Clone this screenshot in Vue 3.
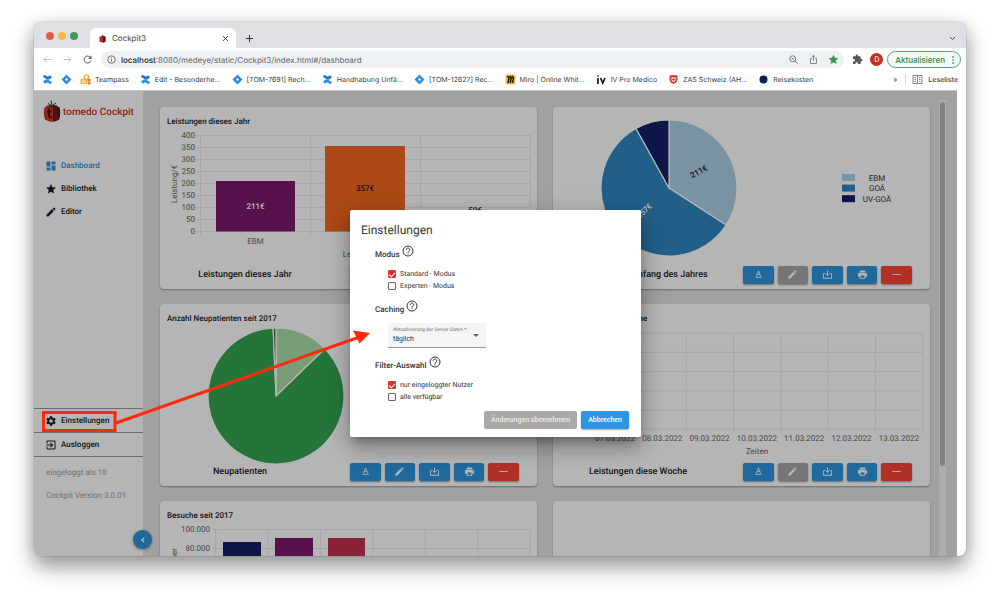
<script setup>
import { ref } from 'vue'

const tabs = [{ title: 'Cockpit3' }]

const bookmarks = [
  { icon: 'confluence', label: '' },
  { icon: 'jira', label: '' },
  { icon: 'team', label: 'Teampass' },
  { icon: 'confluence', label: 'Edit - Besonderhe...' },
  { icon: 'jira', label: '[TOM-7691] Rech...' },
  { icon: 'confluence', label: 'Handhabung Unfä...' },
  { icon: 'jira', label: '[TOM-12627] Rec...' },
  { icon: 'miro', label: 'Miro | Online Whit...' },
  { icon: 'iv', label: 'IV Pro Medico' },
  { icon: 'shield', label: 'ZAS Schweiz (AH...' },
  { icon: 'globe', label: 'Reisekosten' },
]

const nav = [
  { label: 'Dashboard', active: true, d: 'M3 13h8V3H3v10zm0 8h8v-6H3v6zm10 0h8V11h-8v10zm0-18v6h8V3h-8z' },
  { label: 'Bibliothek', d: 'M12 17.27 18.18 21l-1.64-7.03L22 9.24l-7.19-.61L12 2 9.19 8.63 2 9.24l5.46 4.73L5.82 21z' },
  { label: 'Editor', d: 'M3 17.25V21h3.75L17.81 9.94l-3.75-3.75L3 17.25zM20.71 7.04a1 1 0 0 0 0-1.41l-2.34-2.34a1 1 0 0 0-1.41 0l-1.83 1.83 3.75 3.75 1.83-1.83z' },
]

const lowerNav = [
  { label: 'Einstellungen', d: 'M19.14 12.94c.04-.3.06-.61.06-.94 0-.32-.02-.64-.07-.94l2.03-1.58a.49.49 0 0 0 .12-.61l-1.92-3.32a.488.488 0 0 0-.59-.22l-2.39.96c-.5-.38-1.03-.7-1.62-.94l-.36-2.54a.484.484 0 0 0-.48-.41h-3.84c-.24 0-.43.17-.47.41l-.36 2.54c-.59.24-1.13.57-1.62.94l-2.39-.96c-.22-.08-.47 0-.59.22L2.74 8.87c-.12.21-.08.47.12.61l2.03 1.58c-.05.3-.09.63-.09.94s.02.64.07.94l-2.03 1.58a.49.49 0 0 0-.12.61l1.92 3.32c.12.22.37.29.59.22l2.39-.96c.5.38 1.03.7 1.62.94l.36 2.54c.05.24.24.41.48.41h3.84c.24 0 .44-.17.47-.41l.36-2.54c.59-.24 1.13-.56 1.62-.94l2.39.96c.22.08.47 0 .59-.22l1.92-3.32c.12-.22.07-.47-.12-.61l-2.01-1.58zM12 15.6A3.61 3.61 0 0 1 8.4 12c0-1.98 1.62-3.6 3.6-3.6s3.6 1.62 3.6 3.6-1.62 3.6-3.6 3.6z' },
  { label: 'Ausloggen', d: 'M10.09 15.59 11.5 17l5-5-5-5-1.41 1.41L12.67 11H3v2h9.67l-2.58 2.59zM19 3H5a2 2 0 0 0-2 2v4h2V5h14v14H5v-4H3v4a2 2 0 0 0 2 2h14a2 2 0 0 0 2-2V5a2 2 0 0 0-2-2z' },
]

const actions = [
  { name: 'Schrift', kind: 'text', d: 'M5 17v2h14v-2H5zm4.5-4.2h5l.9 2.2h2.1L12.75 4h-1.5L6.5 15h2.1l.9-2.2zM12 5.98 13.87 11h-3.74L12 5.98z' },
  { name: 'Bearbeiten', kind: 'edit', d: nav[2].d },
  { name: 'Herunterladen', kind: 'download', d: 'M11 3h2v8h3l-4 4-4-4h3zM2 11h2v8h16v-8h-4V9h4a2 2 0 0 1 2 2v8a2 2 0 0 1-2 2H4a2 2 0 0 1-2-2v-8a2 2 0 0 1 2-2h4v2z' },
  { name: 'Drucken', kind: 'print', d: 'M19 8H5c-1.66 0-3 1.34-3 3v6h4v4h12v-4h4v-6c0-1.66-1.34-3-3-3zm-3 11H8v-5h8v5zm3-7c-.55 0-1-.45-1-1s.45-1 1-1 1 .45 1 1-.45 1-1 1zm-1-9H6v4h12V3z' },
  { name: 'Entfernen', kind: 'remove', d: 'M3 11h18v2H3z' },
]

const cards = [
  { id: 'bar', title: 'Leistungen dieses Jahr', caption: 'Leistungen dieses Jahr' },
  { id: 'pie', title: '', caption: 'Leistungen seit Anfang des Jahres', locked: true },
  { id: 'new', title: 'Anzahl Neupatienten seit 2017', caption: 'Neupatienten', short: true },
  { id: 'week', title: 'Leistungen diese Woche', caption: 'Leistungen diese Woche', locked: true },
  { id: 'visits', title: 'Besuche seit 2017', caption: '' },
  { id: 'empty', title: '', caption: '' },
]

const yTicks = [400, 350, 300, 250, 200, 150, 100, 50, 0]
const days = ['07.03.2022', '08.03.2022', '09.03.2022', '10.03.2022', '11.03.2022', '12.03.2022', '13.03.2022']
const legend = [
  { label: 'EBM', color: '#abd0e6' },
  { label: 'GOÄ', color: '#3187c0' },
  { label: 'UV-GOÄ', color: '#141f66' },
]

function slice(cx, cy, r, from, to) {
  const point = (deg) => {
    const a = ((deg - 90) * Math.PI) / 180
    return `${cx + r * Math.cos(a)} ${cy + r * Math.sin(a)}`
  }
  return `M${cx} ${cy}L${point(from)}A${r} ${r} 0 ${to - from > 180 ? 1 : 0} 1 ${point(to)}Z`
}

const standard = ref(true)
const expert = ref(false)
const onlyUser = ref(true)
const allUsers = ref(false)
const caching = ref('täglich')
</script>

<template>
  <div class="desktop">
    <div class="window">
      <header class="tabstrip">
        <div class="lights"><i class="red"></i><i class="yellow"></i><i class="green"></i></div>
        <div v-for="t in tabs" :key="t.title" class="tab">
          <svg class="ico9" viewBox="0 0 18 18"><path fill="#b32822" d="M3 6Q9 2 15 6v9q-6 4-12 0z" /><path fill="#5b1715" d="M10 4q4 0 5 2v9q-2 2-5 2z" /><path stroke="#444" stroke-width="1.5" fill="none" d="M9 5V1M6 4l3 1 3-1" /></svg>
          <span>{{ t.title }}</span>
          <button class="plain" aria-label="Tab schließen"><svg class="ico9" viewBox="0 0 18 18"><path d="M4 4l10 10M14 4L4 14" stroke="#444" stroke-width="1.8" /></svg></button>
        </div>
        <button class="plain newtab" aria-label="Neuer Tab"><svg class="ico9" viewBox="0 0 18 18"><path d="M9 2v14M2 9h14" stroke="#333" stroke-width="2" /></svg></button>
        <button class="plain tabmenu" aria-label="Tabs suchen"><svg class="ico9" viewBox="0 0 18 18"><path d="M4 6l5 5 5-5" fill="none" stroke="#444" stroke-width="2" /></svg></button>
      </header>

      <div class="toolbar">
        <button class="plain" aria-label="Zurück"><svg class="ico11" viewBox="0 0 22 22"><path d="M19 11H4M10 5l-6 6 6 6" fill="none" stroke="#b4b7ba" stroke-width="1.8" /></svg></button>
        <button class="plain" aria-label="Vorwärts"><svg class="ico11" viewBox="0 0 22 22"><path d="M3 11h15M12 5l6 6-6 6" fill="none" stroke="#b4b7ba" stroke-width="1.8" /></svg></button>
        <button class="plain" aria-label="Neu laden"><svg class="ico11" viewBox="0 0 22 22"><path d="M17 7a7 7 0 1 0 1 6" fill="none" stroke="#55585c" stroke-width="2" /><path d="M19 3v7h-7z" fill="#55585c" /></svg></button>
        <div class="urlbar">
          <svg class="ico11" viewBox="0 0 22 22"><circle cx="11" cy="11" r="7.5" fill="none" stroke="#5f6368" stroke-width="1.7" /><path d="M11 10v5M11 6.500v2" stroke="#5f6368" stroke-width="1.800" /></svg>
          <span class="url"><b>localhost</b>:8080/medeye/static/Cockpit3/index.html#/dashboard</span>
          <button class="plain" aria-label="Zoom"><svg class="ico11" viewBox="0 0 22 22"><circle cx="9.500" cy="9.500" r="6" fill="none" stroke="#6b6e72" stroke-width="1.800" /><path d="M14 14l5 5M7 9.500h5" stroke="#6b6e72" stroke-width="2" /></svg></button>
          <button class="plain" aria-label="Teilen"><svg class="ico11" viewBox="0 0 22 22"><path d="M7.500 9H5v10h12V9h-2.500M11 14V3M7.500 6L11 2.800 14.500 6" fill="none" stroke="#6b6e72" stroke-width="1.600" /></svg></button>
          <button class="plain" aria-label="Lesezeichen"><svg class="ico11" viewBox="1 1 22 22"><path :d="nav[1].d" fill="#3b9650" /></svg></button>
        </div>
        <button class="plain puzzle" aria-label="Erweiterungen"><svg class="ico11" viewBox="0 0 24 24"><path fill="#55585c" d="M20.500 11H19V7a2 2 0 0 0-2-2h-4V3.500a2.500 2.500 0 0 0-5 0V5H4a2 2 0 0 0-2 2v3.800h1.500a2.700 2.700 0 0 1 0 5.400H2V20a2 2 0 0 0 2 2h3.800v-1.500a2.700 2.700 0 0 1 5.400 0V22H17a2 2 0 0 0 2-2v-4h1.500a2.500 2.500 0 0 0 0-5z" /></svg></button>
        <span class="avatar">D</span>
        <button class="update">Aktualisieren<svg viewBox="0 0 6 16"><circle cx="3" cy="3" r="1.300" /><circle cx="3" cy="8" r="1.300" /><circle cx="3" cy="13" r="1.300" /></svg></button>
      </div>

      <nav class="bookmarks">
        <a v-for="(b, i) in bookmarks" :key="i" href="#" :aria-label="b.label || b.icon" :class="{ bare: !b.label }">
          <svg v-if="b.icon === 'confluence'" class="ico11" viewBox="0 0 22 22"><path fill="#2f8fe0" d="M2 16q5-8 11-4l7 4-2.500 4.500-6-3q-3-1.500-5 2z" /><path fill="#2476cf" d="M20 6q-5 8-11 4L2 6l2.500-4.500 6 3q3 1.500 5-2z" /></svg>
          <svg v-else-if="b.icon === 'jira'" class="ico11" viewBox="0 0 22 22"><path fill="#2d8be0" fill-rule="evenodd" d="M11 1l10 10-10 10L1 11zM11 8l-3 3 3 3 3-3z" /></svg>
          <svg v-else-if="b.icon === 'team'" class="ico11" viewBox="0 0 22 22"><circle cx="13" cy="6" r="4.500" fill="none" stroke="#efa52b" stroke-width="2.400" /><path fill="#f4b544" d="M1 10h14v10H1z" /><path fill="#fff" d="M4 13h7v1.500H4zM4 16h7v1.500H4z" /><path fill="#de7b22" d="M15 10h6v4h-6zM16 15h5v6h-5z" /></svg>
          <svg v-else-if="b.icon === 'miro'" class="ico11" viewBox="0 0 22 22"><rect x="1" y="1" width="20" height="20" rx="3" fill="#f7bc33" /><path d="M5 4l3 4-2 10M9.500 4l3 4-2 10M14 4l3 4-2 10" fill="none" stroke="#161616" stroke-width="3" /></svg>
          <svg v-else-if="b.icon === 'iv'" class="ico11" viewBox="0 0 22 22"><path d="M4 8v12M9 8l4.500 10L18 8" fill="none" stroke="#222" stroke-width="3.600" /><circle cx="4" cy="4" r="2" fill="#2b7b93" /></svg>
          <svg v-else-if="b.icon === 'shield'" class="ico11" viewBox="0 0 22 22"><path fill="#e03a2c" d="M3 3q8-2 16 0v8q-1 7-8 9-7-2-8-9z" /><path fill="#fff" d="M7 7h8v5q-1 3-4 4-3-1-4-4z" /><path d="M11 8v6M8 11h6" stroke="#e03a2c" stroke-width="2" /></svg>
          <svg v-else class="ico11" viewBox="0 0 22 22"><circle cx="11" cy="11" r="8" fill="#111e4c" /></svg>
          <span v-if="b.label">{{ b.label }}</span>
        </a>
        <span class="more">»</span>
        <a href="#" class="reading"><svg class="ico11" viewBox="0 0 22 22"><path d="M2 3h18v16H2zM11 3v16M5 7h3M5 11h3M5 15h3M14 7h3M14 11h3M14 15h3" fill="none" stroke="#666" stroke-width="1.600" /></svg>Leseliste</a>
      </nav>

      <div class="content">
        <aside class="sidebar">
          <div class="brand">
            <svg viewBox="0 0 36 46"><path fill="#cf3029" d="M3 15Q18 7 33 15q3 13-1 24-14 9-28 0-4-11-1-24z" /><path fill="#521817" d="M20 10q9 1 13 5 3 13-1 24-6 4-12 4z" /><path stroke="#a33" stroke-width="2" stroke-dasharray="2 2" d="M24 14v26M28 14v26" /><path fill="none" stroke="#2f302c" stroke-width="2" d="M18 12L16 1M18 12l-8-5M18 12l8-6M18 12L7 12M18 12l10 0" /><path fill="none" stroke="#3b100e" stroke-width="3.500" d="M12 17v15q0 3 6 2M8 23h9" /></svg>
            <span>tomedo Cockpit</span>
          </div>
          <a v-for="n in nav" :key="n.label" href="#" class="navitem" :class="{ active: n.active }"><svg viewBox="2 2 20 20"><path :d="n.d" /></svg>{{ n.label }}</a>
          <div class="lower">
            <a v-for="n in lowerNav" :key="n.label" href="#" class="navitem"><svg viewBox="2 2 20 20"><path :d="n.d" /></svg>{{ n.label }}</a>
            <p>eingeloggt als 18</p>
            <p>Cockpit Version 3.0.01</p>
          </div>
          <button class="toggle" aria-label="Menü einklappen"><svg viewBox="0 0 10 10"><path d="M6 3L4 5 6 7" fill="none" stroke="#fff" stroke-width="1.400" /></svg></button>
        </aside>

        <main class="main">
          <div class="grid">
            <section v-for="c in cards" :key="c.id" class="card">
              <div class="body">
                <h3>{{ c.title }}</h3>
                <svg v-if="c.id === 'bar'" viewBox="0 0 377 158">
                  <g class="gl">
                    <path v-for="(t, i) in yTicks" :key="t" :d="`M37 ${28.5 + i * 12}H370.500`" />
                    <path v-for="i in 4" :key="i" :d="`M${i * 110 - 69.5} 28V128`" />
                  </g>
                  <text v-for="(t, i) in yTicks" :key="t" x="35" :y="31 + i * 12" class="tick end">{{ t }}</text>
                  <text class="tick mid" transform="translate(17 77) rotate(-90)">Leistung/€</text>
                  <rect x="56" y="74" width="79" height="50.500" fill="#7b1a6f" />
                  <rect x="165" y="39" width="80" height="85.500" fill="#f3681f" />
                  <text x="95.500" y="102" class="val mid" fill="#fff">211€</text>
                  <text x="205" y="84" class="val mid" fill="#2b0f3c">357€</text>
                  <text x="315" y="106" class="val mid" fill="#222">50€</text>
                  <text x="95.500" y="137" class="tick mid">EBM</text>
                  <text x="205" y="150" class="tick mid">Leistungsart</text>
                </svg>
                <svg v-else-if="c.id === 'pie'" viewBox="0 0 377 158">
                  <g stroke="#fff" stroke-width="1.200">
                    <path :d="slice(116, 81, 68, 0, 123)" :fill="legend[0].color" />
                    <path :d="slice(116, 81, 68, 123, 331)" :fill="legend[1].color" />
                    <path :d="slice(116, 81, 68, 331, 360)" :fill="legend[2].color" />
                  </g>
                  <text class="val mid" fill="#222" transform="translate(147 67) rotate(-28)">211€</text>
                  <text class="val mid" fill="#fff" transform="translate(93 106) rotate(-43)">357€</text>
                  <g v-for="(l, i) in legend" :key="l.label">
                    <rect x="289" :y="67 + i * 10.600" width="13" height="7" :fill="l.color" />
                    <text x="324" :y="73.500 + i * 10.600" class="leg mid">{{ l.label }}</text>
                  </g>
                </svg>
                <svg v-else-if="c.id === 'new'" viewBox="0 0 377 158">
                  <g stroke="#fff" stroke-width="1.200">
                    <path :d="slice(116, 92, 68, 0, 46)" fill="#abdea8" />
                    <path :d="slice(116, 92, 68, 46, 357.6)" fill="#35a553" />
                    <path :d="slice(116, 92, 68, 357.600, 360)" fill="#5a5560" />
                  </g>
                </svg>
                <svg v-else-if="c.id === 'week'" viewBox="0 0 377 158">
                  <g class="gl">
                    <path v-for="i in 6" :key="i" :d="`M35 ${10 + i * 19.200}H369.800`" />
                    <path v-for="i in 8" :key="i" :d="`M${i * 47.300 - 8.600} 29V129`" />
                  </g>
                  <text v-for="(d, i) in days" :key="d" :x="62 + i * 47.300" y="137" class="tick mid">{{ d }}</text>
                  <text x="204" y="150" class="tick mid">Zeiten</text>
                </svg>
                <svg v-else-if="c.id === 'visits'" viewBox="0 0 377 158">
                  <g class="gl">
                    <path v-for="i in 5" :key="i" :d="`M52 ${9.500 + i * 19}H370.500`" />
                    <path v-for="i in 7" :key="i" :d="`M${i * 52.400 + 3.300} 28V128`" />
                  </g>
                  <text x="50" y="31" class="tick end">100.000</text>
                  <text x="50" y="50" class="tick end">80.000</text>
                  <text class="tick end" transform="translate(17 47) rotate(-90)">Anzahl Besucher</text>
                  <rect x="63" y="41" width="38" height="84" fill="#141f66" />
                  <rect x="115" y="37" width="38" height="88" fill="#7b1a6f" />
                  <rect x="168" y="37" width="37" height="88" fill="#c23450" />
                </svg>
                <svg v-else viewBox="0 0 377 158"></svg>
              </div>
              <footer>
                <strong :class="{ short: c.short }">{{ c.caption }}</strong>
                <div class="actions">
                  <button v-for="a in actions" :key="a.kind" :aria-label="a.name" :class="[a.kind, { off: c.locked && a.kind === 'edit' }]"><svg viewBox="0 0 24 24"><path :d="a.d" /></svg></button>
                </div>
              </footer>
            </section>
          </div>
          <div class="track"><div class="thumb"></div></div>
        </main>

        <div class="backdrop">
          <form class="dialog" role="dialog" aria-labelledby="dlg" @submit.prevent>
            <h2 id="dlg">Einstellungen</h2>
            <h4>Modus <svg viewBox="0 0 24 24"><circle cx="12" cy="12" r="10" /><path d="M8.500 9.500a3.500 3.500 0 1 1 5.500 3q-2 1.300-2 2.500M12 16.500v2" /></svg></h4>
            <div class="options">
              <label><input v-model="standard" type="checkbox">Standard - Modus</label>
              <label><input v-model="expert" type="checkbox">Experten - Modus</label>
            </div>
            <h4>Caching <svg viewBox="0 0 24 24"><circle cx="12" cy="12" r="10" /><path d="M8.500 9.500a3.500 3.500 0 1 1 5.500 3q-2 1.300-2 2.500M12 16.500v2" /></svg></h4>
            <div class="field">
              <label for="caching">Aktualisierung der Server-Daten *</label>
              <select id="caching" v-model="caching"><option>täglich</option><option>stündlich</option></select>
            </div>
            <h4>Filter-Auswahl <svg viewBox="0 0 24 24"><circle cx="12" cy="12" r="10" /><path d="M8.500 9.500a3.500 3.500 0 1 1 5.500 3q-2 1.300-2 2.500M12 16.500v2" /></svg></h4>
            <div class="options">
              <label><input v-model="onlyUser" type="checkbox">nur eingeloggter Nutzer</label>
              <label><input v-model="allUsers" type="checkbox">alle verfügbar</label>
            </div>
            <div class="buttons">
              <button type="submit" disabled>Änderungen übernehmen</button>
              <button type="button" class="primary">Abbrechen</button>
            </div>
          </form>
        </div>

        <svg class="annotation" width="350" height="466" viewBox="0 0 350 466">
          <rect x="9.500" y="321.500" width="71.500" height="18" fill="none" stroke="#fd2b0c" stroke-width="3" />
          <path d="M82 332L324 246.500" stroke="#fd2b0c" stroke-width="3" />
          <path d="M336 242L319 239.500 325.500 252.500z" fill="#fd2b0c" />
        </svg>
      </div>
    </div>
  </div>
</template>

<style>
html, body { margin: 0; background: #fff; }
</style>

<style scoped>
* { box-sizing: border-box; }
svg { display: block; flex: none; }
a { color: inherit; text-decoration: none; }
button { font: inherit; border: 0; cursor: pointer; }
h2, h3, h4, p { margin: 0; }
.desktop { height: 100vh; padding: 22px 34px 45px; overflow: hidden; font-family: Roboto, "Liberation Sans", sans-serif; text-rendering: geometricPrecision; }
.window { height: 100%; display: flex; flex-direction: column; border-radius: 7px; background: #fff; overflow: hidden; box-shadow: 0 0 1px rgba(0,0,0,.5), 0 11px 22px rgba(0,0,0,.38), 0 2px 18px rgba(0,0,0,.12); }
.plain { padding: 0; background: none; }
.ico9 { width: 9px; height: 9px; }
.ico11 { width: 11px; height: 11px; }

.tabstrip { height: 26px; flex: none; display: flex; align-items: flex-end; background: #dee0e5; padding: 0 9px 0 12px; font: 8px Inter, sans-serif; color: #3c4043; }
.lights { display: flex; gap: 4px; align-self: flex-start; padding-top: 10px; width: 44px; }
.lights i { width: 8px; height: 8px; border-radius: 50%; }
.red { background: #e75a4b; }
.yellow { background: #f5b942; }
.green { background: #40985a; }
.tab { width: 146px; height: 20px; display: flex; align-items: center; gap: 5px; padding: 0 6px 0 8px; background: #fff; border-radius: 6px 6px 0 0; }
.tab span { flex: 1; }
.newtab { margin: 0 0 5px 9px; }
.tabmenu { margin: 0 0 5px auto; }

.toolbar { height: 22px; flex: none; display: flex; align-items: center; gap: 9px; padding: 1px 5px 0 8px; }
.urlbar { flex: 1; height: 17px; border-radius: 9px; background: #eff2f4; display: flex; align-items: center; gap: 9px; padding: 0 5px; margin-left: -1px; color: #5f6368; font: 8px Inter, sans-serif; }
.url { flex: 1; margin-left: -5px; white-space: nowrap; }
.url b { font-weight: 500; color: #202124; }
.puzzle { margin-left: -1px; }
.avatar { width: 13px; height: 13px; border-radius: 50%; background: #c22f1d; color: #fff; font-size: 8px; line-height: 13px; text-align: center; margin-left: -2px; }
.update { display: flex; align-items: center; gap: 6px; height: 17px; margin-left: -5px; padding: 0 5px 0 7px; border: 1px solid #5c9e70; border-radius: 9px; background: #f4f8f5; color: #33854a; font: 500 8px Inter, sans-serif; white-space: nowrap; }
.update svg { width: 4px; height: 10px; fill: #33854a; }

.bookmarks { height: 20px; flex: none; display: flex; align-items: center; gap: 11px; padding: 0 8px 2px; font: 7px Inter, sans-serif; color: #3c4043; white-space: nowrap; }
.bookmarks a { display: flex; align-items: center; gap: 4px; }
.bookmarks .bare { margin-right: -3px; }
.more { margin-left: auto; }
.bookmarks .reading { border-left: 1px solid #d5d7da; padding-left: 6px; margin-left: -3px; gap: 5px; font-weight: 500; }

.content { flex: 1; min-height: 0; position: relative; display: flex; margin-right: 9px; border-top: 1px solid #c4c4c4; background: #e3e3e3; }
.sidebar { position: relative; width: 109px; flex: none; background: #fff; display: flex; flex-direction: column; font-size: 8px; color: #201b1c; font-weight: 500; }
.brand { display: flex; align-items: center; gap: 2px; height: 40px; padding-left: 9px; margin-bottom: 23px; font-size: 10px; color: #d12a20; white-space: nowrap; }
.brand svg { width: 18px; height: 23px; }
.brand span { padding-top: 3px; }
.navitem { height: 23px; display: flex; align-items: center; gap: 5px; padding-left: 12px; }
.navitem svg { width: 10px; height: 10px; fill: currentColor; }
.navitem.active { color: #2e94de; }
.lower { margin-top: auto; height: 148px; border-top: 1px solid #999; }
.lower .navitem { height: 24px; border-bottom: 1px solid #999; }
.lower p { height: 23px; line-height: 23px; padding: 0 12px; color: #a2a2a2; font-weight: 400; }
.lower .navitem + p { margin-top: 4px; }
.toggle { position: absolute; right: -9px; bottom: 7px; z-index: 1; width: 19px; height: 19px; padding: 0; border-radius: 50%; background: #2e94de; box-shadow: 0 1px 3px rgba(0,0,0,.4); display: grid; place-items: center; }
.toggle svg { width: 10px; height: 10px; }

.main { flex: 1; min-width: 0; display: flex; overflow: hidden; padding: 0 11px 0 17px; }
.grid { flex: 1; display: grid; grid-template-columns: 1fr 1fr; gap: 15px 16px; align-content: start; padding-top: 16px; margin-right: 9px; }
.card { min-width: 0; background: #fff; border-radius: 4px; box-shadow: 0 1px 2px rgba(0,0,0,.35); }
.body { display: grid; }
.body > * { grid-area: 1 / 1; }
.body > svg { width: 100%; height: auto; overflow: visible; }
.card h3 { padding: 8px 7px; font-size: 8px; line-height: 13px; font-weight: 500; color: #222; }
.gl path { stroke: #ebebeb; stroke-width: 1; fill: none; }
.tick { font-size: 8px; fill: #666; }
.val { font-size: 8px; font-weight: 500; }
.leg { font-size: 8px; fill: #333; }
.mid { text-anchor: middle; }
.end { text-anchor: end; }
.card footer { display: flex; justify-content: space-between; align-items: center; height: 24px; padding: 0 18px 5px 0; }
.card strong { width: 170px; text-align: center; font-size: 9px; font-weight: 500; color: #1c1c1c; white-space: nowrap; }
.card strong.short { width: 160px; }
.actions { width: 169px; display: grid; grid-template-columns: repeat(5, 1fr); gap: 4px; }
.actions button { height: 18px; padding: 0; border-radius: 2px; background: #2e94de; display: grid; place-items: center; box-shadow: 0 1px 2px rgba(0,0,0,.4); }
.actions svg { width: 11px; height: 11px; fill: #fff; }
.actions .remove { background: #fb4637; }
.actions .off { background: #a6a6a6; }
.track { width: 7px; margin-top: 9px; padding: 2px 1px; background: #f5f5f5; }
.thumb { height: 364px; border-radius: 3px; background: #b5b5b5; }

.backdrop { position: absolute; inset: 0; z-index: 2; display: flex; align-items: center; justify-content: center; background: rgba(0,0,0,.29); }
.dialog { width: 291px; padding: 12px 12px 8px 11px; background: #fff; border-radius: 2px; box-shadow: 0 6px 8px -3px rgba(0,0,0,.25), 0 12px 20px rgba(0,0,0,.22), 0 4px 26px rgba(0,0,0,.15); color: #333; }
.dialog h2 { font-size: 12px; line-height: 16px; font-weight: 400; margin-bottom: 7px; }
.dialog h4 { display: flex; align-items: center; gap: 2px; height: 18px; padding-left: 14px; font-size: 8px; font-weight: 500; }
.dialog h4 svg { width: 12px; height: 12px; margin-bottom: 6px; fill: none; stroke: #333; stroke-width: 2; }
.options { padding: 5px 0 8px 27px; }
.options label { display: flex; align-items: center; gap: 4px; height: 12px; font-size: 7px; }
.options input { appearance: none; width: 8px; height: 8px; margin: 0; border: 1px solid #666; border-radius: 1px; display: grid; place-items: center; }
.options input:checked { background: #e03127; border-color: #e03127; }
.options input:checked::after { content: ""; width: 5px; height: 3px; border: solid #fff; border-width: 0 0 1px 1px; transform: rotate(-45deg); }
.field { position: relative; width: 98px; height: 25px; margin: 5px 0 8px 27px; background: #f2f4f5; border-bottom: 1px solid #999; }
.field::after { content: ""; position: absolute; right: 7px; top: 11px; border: solid transparent; border-width: 3px 3px 0; border-top-color: #666; }
.field label { position: absolute; left: 5px; top: 4px; font-size: 5px; line-height: 7px; color: #777; white-space: nowrap; }
.field select { appearance: none; width: 100%; height: 100%; padding: 8px 5px 0; border: 0; background: none; font: 7px Roboto, sans-serif; color: #333; }
.buttons { display: flex; justify-content: flex-end; gap: 4px; }
.buttons button { height: 18px; padding: 0 7px; border-radius: 2px; background: #a9a9a9; color: #ececec; font-size: 7px; font-weight: 500; }
.buttons .primary { background: #2e94e4; color: #fff; box-shadow: 0 1px 2px rgba(0,0,0,.35); }
.annotation { position: absolute; left: 0; top: 0; z-index: 3; pointer-events: none; }
</style>
